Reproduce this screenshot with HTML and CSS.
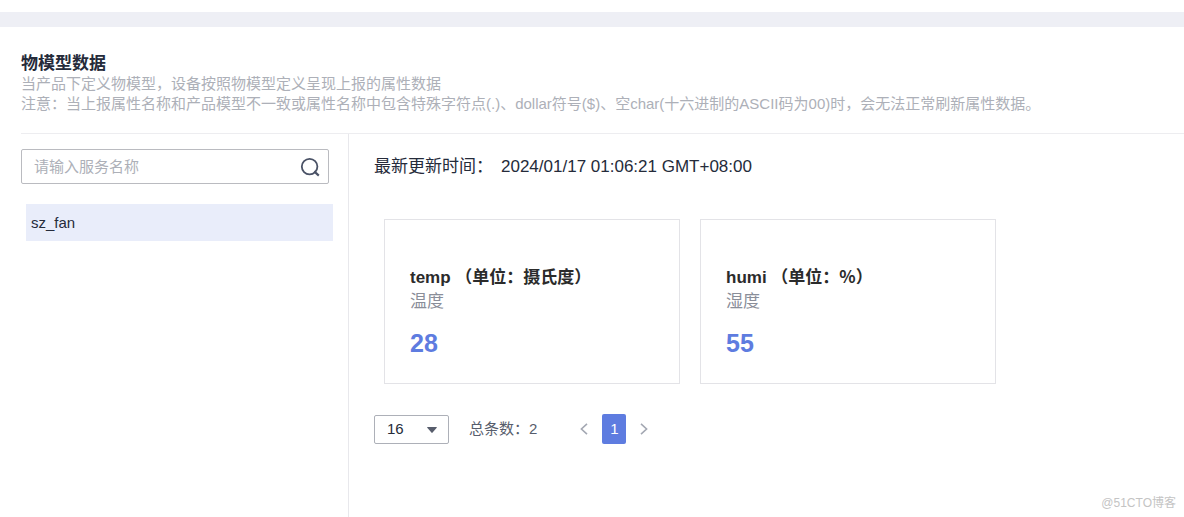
FILE: index.html
```html
<!DOCTYPE html>
<html lang="zh-CN">
<head>
<meta charset="utf-8">
<meta name="viewport" content="width=device-width, initial-scale=1">
<title>物模型数据</title>
<link rel="stylesheet" href="styles.css">
</head>
<body>
<div class="band"></div>
<main class="page">
  <header class="intro">
    <h1 class="title">物模型数据</h1>
    <p class="note">当产品下定义物模型，设备按照物模型定义呈现上报的属性数据</p>
    <p class="note">注意：当上报属性名称和产品模型不一致或属性名称中包含特殊字符点(.)、dollar符号($)、空char(十六进制的ASCII码为00)时，会无法正常刷新属性数据。</p>
  </header>
  <div class="columns">
    <aside class="sidebar">
      <form class="search">
        <input class="search-input" type="text" placeholder="请输入服务名称" aria-label="请输入服务名称">
        <button class="search-button" type="button" aria-label="搜索">
          <svg width="20" height="20" viewBox="0 0 20 20" fill="none" stroke="#4a5266" stroke-width="1.8"><circle cx="9.6" cy="9.6" r="7.8"/><path d="M14.2 14.4l4.6 4.2" stroke-width="2.1"/></svg>
        </button>
      </form>
      <ul class="services">
        <li><button class="service" type="button">sz_fan</button></li>
      </ul>
    </aside>
    <section class="content">
      <p class="updated"><span>最新更新时间：</span><time datetime="2024-01-17T01:06:21+08:00">2024/01/17 01:06:21 GMT+08:00</time></p>
      <div class="cards">
        <article class="card">
          <h2 class="card-title">temp <span class="unit">（单位：摄氏度）</span></h2>
          <p class="card-name">温度</p>
          <p class="card-value">28</p>
        </article>
        <article class="card">
          <h2 class="card-title">humi <span class="unit">（单位：%）</span></h2>
          <p class="card-name">湿度</p>
          <p class="card-value">55</p>
        </article>
      </div>
      <nav class="pager" aria-label="分页">
        <div class="size">
          <select class="size-select" aria-label="每页条数"><option>16</option></select>
          <svg class="size-arrow" width="10" height="6" viewBox="0 0 10 6"><path d="M0.6 0h8.8q.8 0 .3.7L5.6 5.6q-.6.6-1.2 0L.3.7Q-.2 0 .6 0z" fill="#575d6c"/></svg>
        </div>
        <span class="total">总条数：2</span>
        <div class="pages">
          <button class="step" type="button" aria-label="上一页"><svg width="8" height="12" viewBox="0 0 8 12" fill="none" stroke="#a4a8b3" stroke-width="1.6"><path d="M7 .8L1.4 6 7 11.2"/></svg></button>
          <button class="current" type="button" aria-current="page">1</button>
          <button class="step" type="button" aria-label="下一页"><svg width="8" height="12" viewBox="0 0 8 12" fill="none" stroke="#a4a8b3" stroke-width="1.6"><path d="M1 .8L6.6 6 1 11.2"/></svg></button>
        </div>
      </nav>
    </section>
  </div>
</main>
<span class="watermark">@51CTO博客</span>
</body>
</html>
```
FILE: styles.css
```css
* {
  box-sizing: border-box;
}

body {
  display: flex;
  flex-direction: column;
  min-height: 100vh;
  margin: 0;
  padding-top: 12px;
  background: #fff;
  color: #252b3a;
  font-family: "Liberation Sans", "Noto Sans CJK SC", sans-serif;
  font-size: 15px;
  line-height: 20px;
}

h1, h2, p, ul {
  margin: 0;
  padding: 0;
}

button, input, select {
  margin: 0;
  font: inherit;
  color: inherit;
}

button {
  padding: 0;
  border: 0;
  background: none;
}

.band {
  height: 15px;
  background: #eeeff5;
}

.page {
  display: flex;
  flex: 1;
  flex-direction: column;
  padding-left: 21px;
}

.intro {
  padding: 27px 0 19px;
  border-bottom: 1px solid #ededf0;
}

.title {
  font-size: 17px;
  line-height: 20px;
}

.note {
  color: #adb0b8;
}

.columns {
  display: flex;
  flex: 1;
}

.sidebar {
  flex: none;
  width: 328px;
  padding: 15px 15px 0 0;
  border-right: 1px solid #e8e8ec;
}

.search {
  display: flex;
  align-items: center;
  height: 35px;
  margin-right: 4px;
  padding: 0 8px 0 12px;
  border: 1px solid #babbc0;
  border-radius: 2px;
}

.search-input {
  flex: 1;
  min-width: 0;
  padding: 0;
  border: 0;
  outline: 0;
  background: none;
}

.search-input::placeholder {
  color: #adb0b8;
}

.search-button {
  display: flex;
}

.services {
  margin-top: 20px;
  padding-left: 5px;
  list-style: none;
}

.service {
  display: block;
  width: 100%;
  height: 37px;
  padding: 0 5px;
  background: #e9edfa;
  text-align: left;
}

.content {
  flex: 1;
  min-width: 0;
  padding: 21px 24px 24px 25px;
}

.updated {
  display: flex;
  flex-wrap: wrap;
  gap: 8px;
  font-size: 17px;
  line-height: 24px;
}

.cards {
  display: grid;
  grid-template-columns: repeat(auto-fill, 296px);
  gap: 20px;
  margin: 40px 0 30px 10px;
}

.card {
  padding: 44px 25px 24px;
  border: 1px solid #e3e3e7;
}

.card-title {
  color: #2b2b2b;
  font-size: 17px;
  line-height: 24px;
}

.unit {
  font-family: "Noto Sans CJK SC", sans-serif;
}

.card-name {
  color: #8a8e99;
  font-size: 17px;
  line-height: 24px;
}

.card-value {
  margin-top: 14px;
  color: #5e7ce0;
  font-size: 25px;
  font-weight: 700;
  line-height: 31px;
}

.pager {
  display: flex;
  align-items: center;
  color: #575d6c;
}

.size {
  position: relative;
  margin-right: 20px;
}

.size-select {
  display: block;
  width: 75px;
  height: 29px;
  padding: 0 12px;
  appearance: none;
  border: 1px solid #adb0b8;
  border-radius: 2px;
  background: #fff;
  color: #252b3a;
}

.size-arrow {
  position: absolute;
  top: 12px;
  right: 12px;
  pointer-events: none;
}

.pages {
  display: flex;
  align-items: center;
  gap: 14px;
  margin-left: 43px;
}

.step {
  display: flex;
}

.current {
  width: 24px;
  height: 30px;
  border-radius: 2px;
  background: #5e7ce0;
  color: #fff;
}

.watermark {
  position: absolute;
  right: 8px;
  bottom: 4px;
  color: #c4c4c4;
  font-size: 12px;
}
```
